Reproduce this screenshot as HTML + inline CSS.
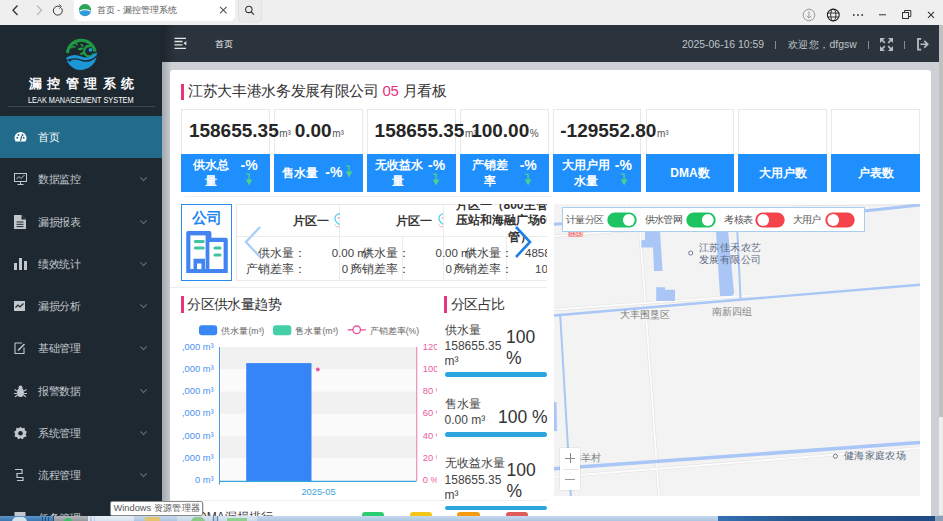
<!DOCTYPE html>
<html><head><meta charset="utf-8">
<style>
*{box-sizing:border-box;margin:0;padding:0}
html,body{width:943px;height:521px;overflow:hidden;background:#cdd1d6;font-family:"Liberation Sans",sans-serif;}
body{position:relative}
.a{position:absolute}
.nw{white-space:nowrap}
#chrome{left:0;top:0;width:943px;height:25px;background:#efefef}
#tab{left:74px;top:0;width:161px;height:21px;background:#fff;border-radius:0 0 5px 5px}
#side{left:0;top:25px;width:162px;height:496px;background:#1d2830}
#head{left:162px;top:25px;width:777px;height:37px;background:#2b343d}
#card{left:170px;top:70px;width:761px;height:460px;background:#fff;border-radius:3px}
#sb{left:939px;top:25px;width:4px;height:392px;background:#c0c0c0}
#sbt{left:939px;top:417px;width:4px;height:98px;background:#eeeeee}
#task{left:0;top:515px;width:943px;height:6px;background:linear-gradient(#a9c4e0,#7fa3c9)}
.menu{left:0;width:162px;height:42px;color:#c2c7cc;font-size:11px}
.menu .t{position:absolute;left:38px;top:50%;transform:translateY(-50%);white-space:nowrap;letter-spacing:-0.5px;--ls:-0.5px}
.menu .ic{position:absolute;left:14px;top:50%;transform:translateY(-50%)}
.menu .chev{position:absolute;left:140.8px;top:50%;width:5px;height:5px;border-right:1px solid #66727c;border-bottom:1px solid #66727c;transform:translateY(-75%) rotate(45deg)}
.ctxt{color:#dfe3e6}
.kpi{position:absolute;top:109px;width:88.6px;height:81.8px;border:1px solid #e9e9e9;background:#fff}
.kpi .num{position:absolute;left:6.5px;width:75px;text-align:center;top:10px;font-size:19px;font-weight:bold;color:#262626;white-space:nowrap;line-height:22px;z-index:3}
.kpi .num small{font-size:10px;font-weight:normal;color:#555;margin-left:0.5px}
.kpi .lab{position:absolute;left:-1px;top:44.4px;width:88.6px;height:37.4px;background:#1e8ffc;color:#fff;font-weight:bold;font-size:12px;line-height:15px}
.lab .l{position:absolute;white-space:nowrap}
.arr{position:absolute}

.c{display:inline-block;width:calc(1em + var(--ls,0px));font-style:normal;text-indent:0}
</style></head><body>
<!-- browser chrome -->
<div id="chrome" class="a"></div>
<div id="tab" class="a"></div>
<svg class="a" style="left:0;top:0" width="943" height="25">
 <path d="M17.5 5.5 L13 10.2 L17.5 15" fill="none" stroke="#333" stroke-width="1.3"/>
 <path d="M37 5.5 L41.5 10.2 L37 15" fill="none" stroke="#bbb" stroke-width="1.3"/>
 <path d="M61.6 8.2 A4.5 4.5 0 1 1 59.8 6.6" fill="none" stroke="#3a3a3a" stroke-width="1"/>
 <path d="M59.2 4.6 L61.4 6.4 L59.4 8.6" fill="none" stroke="#3a3a3a" stroke-width="1"/>
 <circle cx="85" cy="10.2" r="6" fill="#2f9ad6"/>
 <path d="M79 10 A6 6 0 0 1 91 10 Z" fill="#2aa655"/>
 <path d="M79.5 11 Q85 8.5 90.5 11" stroke="#fff" stroke-width="1.2" fill="none"/>
 <path d="M220 6.8 L226.6 13.4 M226.6 6.8 L220 13.4" stroke="#555" stroke-width="1.1"/>
 <rect x="238.5" y="-3" width="23" height="25" rx="4" fill="#ebebeb" stroke="#e2e2e2"/>
 <circle cx="248.8" cy="9.4" r="3.2" fill="none" stroke="#333" stroke-width="1.05"/>
 <path d="M251.2 11.8 L254 14.6" stroke="#333" stroke-width="1.2"/>
 <circle cx="809" cy="15" r="5.8" fill="none" stroke="#999" stroke-width="1"/>
 <path d="M809 11.5 V18 M806.6 15.8 L809 18.2 L811.4 15.8" fill="none" stroke="#999" stroke-width="1"/>
 <circle cx="833.3" cy="15" r="5.9" fill="none" stroke="#222" stroke-width="1.1"/>
 <ellipse cx="833.3" cy="15" rx="2.6" ry="5.9" fill="none" stroke="#222" stroke-width="0.9"/>
 <path d="M827.5 13 H839 M827.5 17 H839" stroke="#222" stroke-width="0.9"/>
 <circle cx="853.8" cy="15" r="0.9" fill="#333"/><circle cx="858" cy="15" r="0.9" fill="#333"/><circle cx="862.2" cy="15" r="0.9" fill="#333"/>
 <path d="M879 14.8 H886" stroke="#333" stroke-width="1"/>
 <rect x="902.5" y="12.5" width="6" height="6" fill="none" stroke="#333" stroke-width="1"/>
 <path d="M904.5 12.5 V10.5 H910.8 V16.5 H908.5" fill="none" stroke="#333" stroke-width="1"/>
 <path d="M928 11.8 L934 17.8 M934 11.8 L928 17.8" stroke="#333" stroke-width="1.1"/>
</svg>
<div class="a nw" style="left:96.5px;top:4px;font-size:9px;color:#5c5c5c;line-height:13px"><i class="c">首</i><i class="c">页</i> - <i class="c">漏</i><i class="c">控</i><i class="c">管</i><i class="c">理</i><i class="c">系</i><i class="c">统</i></div>

<!-- sidebar -->
<div id="side" class="a"></div>
<svg class="a" style="left:63.5px;top:36px" width="35" height="35" viewBox="0 0 34 34">
 <path d="M3.3 16.5 A13.6 13.6 0 0 1 30.2 15.2" fill="none" stroke="#1e9a45" stroke-width="3"/>
 <path d="M7 12 Q9 9 11 11 M9 7 Q12 6 13 9" fill="none" stroke="#1e9a45" stroke-width="1.6"/>
 <path d="M13 13 Q16 10 19 12 Q17 15 13 13 Z M15 18 Q18 14 21 16 Q19 19 15 18 Z M16 7 Q19 8 19 11 Q16 10 16 7 Z M21 9 Q24 8 24 11 Q22 12 21 9 Z" fill="#22a04a"/>
 <path d="M26 10 A5 5 0 1 0 29 17" fill="none" stroke="#1e9a45" stroke-width="2.2"/>
 <circle cx="25.7" cy="13.5" r="1.8" fill="#1d96d6"/>
 <path d="M2.3 21 Q9 16.5 17 20 Q24 23 31.6 15.5 L32 18.5 Q25 25.5 17 22.8 Q9 20 2.6 23.2 Z" fill="#1d96d6"/>
 <path d="M2.8 24.5 Q10 21.5 17 24.2 Q25 27 31.7 20.5 A15.4 15.4 0 0 1 2.8 24.5 Z" fill="#1d96d6"/>
 <circle cx="6" cy="23.8" r="1.1" fill="#1d2830"/>
</svg>
<div class="a nw" style="left:28.5px;top:76px;font-size:12.5px;font-weight:bold;color:#fff;letter-spacing:6px;--ls:6px;line-height:16px"><i class="c">漏</i><i class="c">控</i><i class="c">管</i><i class="c">理</i><i class="c">系</i><i class="c">统</i></div>
<div class="a nw" style="left:28px;top:94.5px;font-size:9.2px;color:#fff;line-height:11px;transform:scaleX(0.8);transform-origin:0 0">LEAK MANAGEMENT SYSTEM</div>
<div class="a" style="left:8px;top:105.5px;width:147px;height:1px;background:#3b4751"></div>

<div class="a menu" style="top:116px;background:#226b8b;color:#fff">
 <svg class="ic" width="13" height="11" viewBox="0 0 13 11"><path d="M1.6 10 A6 6 0 1 1 11.4 10 Z" fill="#fff"/><circle cx="3.3" cy="6.2" r="1" fill="#226b8b"/><circle cx="4.5" cy="3.5" r="1" fill="#226b8b"/><circle cx="8.5" cy="3.5" r="1" fill="#226b8b"/><circle cx="9.7" cy="6.2" r="1" fill="#226b8b"/><path d="M6.5 9.5 L7.6 4.5" stroke="#226b8b" stroke-width="1.2"/></svg>
 <div class="t"><i class="c">首</i><i class="c">页</i></div>
</div>
<div class="a menu" style="top:158.3px">
 <svg class="ic" width="13" height="12" viewBox="0 0 13 12"><rect x="0.5" y="0.5" width="12" height="8" fill="none" stroke="#c2c7cc"/><path d="M2.5 6 L5 3.5 L7 5.5 L10.5 2" stroke="#c2c7cc" fill="none"/><path d="M6.5 8.5 V11 M3.5 11.5 H9.5" stroke="#c2c7cc"/></svg>
 <div class="t"><i class="c">数</i><i class="c">据</i><i class="c">监</i><i class="c">控</i></div><div class="chev"></div>
</div>
<div class="a menu" style="top:200.6px">
 <svg class="ic" width="12" height="14" viewBox="0 0 12 14"><path d="M0 0 H7.5 L12 4.5 V14 H0 Z" fill="#c2c7cc"/><path d="M7.5 0 V4.5 H12" fill="#1d2830"/><path d="M2.5 7 H9.5 M2.5 9.3 H9.5 M2.5 11.6 H9.5" stroke="#1d2830" stroke-width="1"/></svg>
 <div class="t"><i class="c">漏</i><i class="c">损</i><i class="c">报</i><i class="c">表</i></div><div class="chev"></div>
</div>
<div class="a menu" style="top:242.8px">
 <svg class="ic" width="13" height="12" viewBox="0 0 13 12"><rect x="0" y="5" width="3" height="7" fill="#c2c7cc"/><rect x="5" y="0" width="3" height="12" fill="#c2c7cc"/><rect x="10" y="3" width="3" height="9" fill="#c2c7cc"/></svg>
 <div class="t"><i class="c">绩</i><i class="c">效</i><i class="c">统</i><i class="c">计</i></div><div class="chev"></div>
</div>
<div class="a menu" style="top:285.1px">
 <svg class="ic" width="11" height="10" viewBox="0 0 11 10"><rect x="0" y="0" width="11" height="10" fill="#c2c7cc"/><path d="M1.5 6.5 L4 4 L6 6 L9.5 2.5" stroke="#1d2830" fill="none" stroke-width="1.2"/></svg>
 <div class="t"><i class="c">漏</i><i class="c">损</i><i class="c">分</i><i class="c">析</i></div><div class="chev"></div>
</div>
<div class="a menu" style="top:327.4px">
 <svg class="ic" width="12" height="13" viewBox="0 0 12 13"><path d="M1 1.5 H8 M1 1.5 V12 H10 V6" fill="none" stroke="#c2c7cc" stroke-width="1.1"/><path d="M4 9 L10.5 2.5" stroke="#c2c7cc" stroke-width="1.6"/></svg>
 <div class="t"><i class="c">基</i><i class="c">础</i><i class="c">管</i><i class="c">理</i></div><div class="chev"></div>
</div>
<div class="a menu" style="top:369.7px">
 <svg class="ic" width="13" height="13" viewBox="0 0 13 13"><ellipse cx="6.5" cy="8" rx="3.5" ry="4.5" fill="#c2c7cc"/><circle cx="6.5" cy="3" r="2" fill="#c2c7cc"/><path d="M0.5 5 L3 6.5 M12.5 5 L10 6.5 M0 9 H3 M13 9 H10 M1 12.5 L3.5 10.5 M12 12.5 L9.5 10.5" stroke="#c2c7cc" stroke-width="1.1"/></svg>
 <div class="t"><i class="c">报</i><i class="c">警</i><i class="c">数</i><i class="c">据</i></div><div class="chev"></div>
</div>
<div class="a menu" style="top:412.0px">
 <svg class="ic" width="13" height="13" viewBox="0 0 13 13"><path d="M6.5 0 L8 1.8 L10.6 1.3 L10.9 3.9 L13 5.3 L11.7 7.6 L12.5 10.1 L9.9 10.7 L8.6 13 L6.5 11.6 L4.4 13 L3.1 10.7 L0.5 10.1 L1.3 7.6 L0 5.3 L2.1 3.9 L2.4 1.3 L5 1.8 Z" fill="#c2c7cc"/><circle cx="6.5" cy="6.8" r="2.3" fill="#1d2830"/></svg>
 <div class="t"><i class="c">系</i><i class="c">统</i><i class="c">管</i><i class="c">理</i></div><div class="chev"></div>
</div>
<div class="a menu" style="top:454.2px">
 <svg class="ic" width="12" height="13" viewBox="0 0 12 13"><path d="M1 1 H8 V5 H3 V9 H9 V12 H3" fill="none" stroke="#c2c7cc" stroke-width="1.2"/></svg>
 <div class="t"><i class="c">流</i><i class="c">程</i><i class="c">管</i><i class="c">理</i></div><div class="chev"></div>
</div>
<div class="a menu" style="top:496.5px">
 <svg class="ic" width="12" height="13" viewBox="0 0 12 13"><rect x="0.5" y="0.5" width="11" height="12" fill="#c2c7cc"/></svg>
 <div class="t"><i class="c">任</i><i class="c">务</i><i class="c">管</i><i class="c">理</i></div><div class="chev"></div>
</div>

<!-- header -->
<div id="head" class="a"></div>
<div class="a" style="left:162px;top:25px;width:14px;height:37px;background:linear-gradient(90deg,rgba(20,28,34,.6),rgba(43,52,61,0))"></div>
<svg class="a" style="left:174px;top:37px" width="14" height="13" viewBox="0 0 14 13">
 <path d="M0.5 1.3 H12 M0.5 4.5 H8.5 M0.5 7.8 H8.5 M0.5 11.3 H12" stroke="#e3e6e8" stroke-width="1.3"/>
 <path d="M12.3 4 L9.5 6.2 L12.3 8.4 Z" fill="#e3e6e8"/>
</svg>
<div class="a nw" style="left:214.5px;top:38px;font-size:9px;color:#f2f2f2;line-height:12px"><i class="c">首</i><i class="c">页</i></div>
<div class="a nw" style="left:682px;top:38px;font-size:10.4px;color:#bfc4c8;line-height:13px">2025-06-16 10:59</div>
<div class="a" style="left:775.3px;top:41.2px;width:1px;height:7.4px;background:#858c92"></div>
<div class="a nw" style="left:788px;top:37.5px;font-size:10.4px;color:#bfc4c8;line-height:13px"><i class="c">欢</i><i class="c">迎</i><i class="c">您</i><i class="c">，</i>dfgsw</div>
<div class="a" style="left:868.3px;top:41.2px;width:1px;height:7.4px;background:#858c92"></div>
<svg class="a" style="left:880px;top:37.6px" width="13" height="13" viewBox="0 0 13 13">
 <g fill="#b8bdc2"><path d="M0 0 H5 L0 5 Z"/><path d="M13 0 H8 L13 5 Z"/><path d="M0 13 H5 L0 8 Z"/><path d="M13 13 H8 L13 8 Z"/></g>
 <g stroke="#b8bdc2" stroke-width="1.7"><path d="M1.5 1.5 L4.8 4.8 M11.5 1.5 L8.2 4.8 M1.5 11.5 L4.8 8.2 M11.5 11.5 L8.2 8.2"/></g>
</svg>
<div class="a" style="left:904.3px;top:41.2px;width:1px;height:7.4px;background:#858c92"></div>
<svg class="a" style="left:917px;top:38px" width="12" height="12.5" viewBox="0 0 12 12.5">
 <g stroke="#b8bdc2" fill="none"><path d="M4.2 0.9 H1 V11.6 H4.2" stroke-width="1.8"/><path d="M3.5 6.25 H10.5 M7.3 2.8 L10.7 6.25 L7.3 9.7" stroke-width="1.7"/></g>
</svg>

<!-- content -->
<div class="a" style="left:162px;top:62px;width:10px;height:453px;background:linear-gradient(90deg,rgba(120,128,136,.5),rgba(205,209,214,0))"></div>
<div id="card" class="a"></div>
<div class="a" style="left:181px;top:83.5px;width:3px;height:16px;background:#e8337e"></div>
<div class="a nw" style="left:188px;top:81px;font-size:15px;letter-spacing:-0.32px;--ls:-0.32px;color:#333;line-height:20px"><i class="c">江</i><i class="c">苏</i><i class="c">大</i><i class="c">丰</i><i class="c">港</i><i class="c">水</i><i class="c">务</i><i class="c">发</i><i class="c">展</i><i class="c">有</i><i class="c">限</i><i class="c">公</i><i class="c">司</i> <span style="color:#e8337e">05</span> <i class="c">月</i><i class="c">看</i><i class="c">板</i></div>
<div class="kpi" style="left:181.40px"><div class="num">158655.35<small>m³</small></div><div class="lab"><div class="l" style="left:12.1px;top:4.0px"><i class="c">供</i><i class="c">水</i><i class="c">总</i></div><div class="l" style="left:23.5px;top:19.5px"><i class="c">量</i></div><div class="l" style="left:59.1px;top:3.5px;font-size:14px">-%</div><svg class="arr" style="left:63.5px;top:18.5px" width="8" height="13" viewBox="0 0 8 13"><path d="M1 1.2 H4.1 V7.5" fill="none" stroke="#4fd18b" stroke-width="1.3"/><path d="M0.8 6.6 H7.4 L4.1 12.4 Z" fill="#4fd18b"/></svg></div></div>
<div class="kpi" style="left:274.24px"><div class="num">0.00<small>m³</small></div><div class="lab"><div class="l" style="left:8.0px;top:12.0px"><i class="c">售</i><i class="c">水</i><i class="c">量</i></div><div class="l" style="left:51.0px;top:10.5px;font-size:14px">-%</div><svg class="arr" style="left:70.7px;top:10.5px" width="8" height="13" viewBox="0 0 8 13"><path d="M1 1.2 H4.1 V7.5" fill="none" stroke="#4fd18b" stroke-width="1.3"/><path d="M0.8 6.6 H7.4 L4.1 12.4 Z" fill="#4fd18b"/></svg></div></div>
<div class="kpi" style="left:367.08px"><div class="num">158655.35<small>m³</small></div><div class="lab"><div class="l" style="left:8.4px;top:4.0px"><i class="c">无</i><i class="c">收</i><i class="c">益</i><i class="c">水</i></div><div class="l" style="left:25.3px;top:19.5px"><i class="c">量</i></div><div class="l" style="left:60.9px;top:3.5px;font-size:14px">-%</div><svg class="arr" style="left:64.9px;top:18.5px" width="8" height="13" viewBox="0 0 8 13"><path d="M1 1.2 H4.1 V7.5" fill="none" stroke="#4fd18b" stroke-width="1.3"/><path d="M0.8 6.6 H7.4 L4.1 12.4 Z" fill="#4fd18b"/></svg></div></div>
<div class="kpi" style="left:459.92px"><div class="num">100.00<small>%</small></div><div class="lab"><div class="l" style="left:11.9px;top:4.0px"><i class="c">产</i><i class="c">销</i><i class="c">差</i></div><div class="l" style="left:24.1px;top:19.5px"><i class="c">率</i></div><div class="l" style="left:59.8px;top:3.5px;font-size:14px">-%</div><svg class="arr" style="left:64.1px;top:18.5px" width="8" height="13" viewBox="0 0 8 13"><path d="M1 1.2 H4.1 V7.5" fill="none" stroke="#4fd18b" stroke-width="1.3"/><path d="M0.8 6.6 H7.4 L4.1 12.4 Z" fill="#4fd18b"/></svg></div></div>
<div class="kpi" style="left:552.76px"><div class="num">-129552.80<small>m³</small></div><div class="lab"><div class="l" style="left:9.5px;top:4.0px"><i class="c">大</i><i class="c">用</i><i class="c">户</i><i class="c">用</i></div><div class="l" style="left:21.0px;top:19.5px"><i class="c">水</i><i class="c">量</i></div><div class="l" style="left:62.1px;top:3.5px;font-size:14px">-%</div><svg class="arr" style="left:66.8px;top:18.5px" width="8" height="13" viewBox="0 0 8 13"><path d="M1 1.2 H4.1 V7.5" fill="none" stroke="#4fd18b" stroke-width="1.3"/><path d="M0.8 6.6 H7.4 L4.1 12.4 Z" fill="#4fd18b"/></svg></div></div>
<div class="kpi" style="left:645.60px"><div class="num"></div><div class="lab"><div class="l" style="left:0;top:12.0px;width:88.6px;text-align:center">DMA<i class="c">数</i></div></div></div>
<div class="kpi" style="left:738.44px"><div class="num"></div><div class="lab"><div class="l" style="left:0;top:12.0px;width:88.6px;text-align:center"><i class="c">大</i><i class="c">用</i><i class="c">户</i><i class="c">数</i></div></div></div>
<div class="kpi" style="left:831.28px"><div class="num"></div><div class="lab"><div class="l" style="left:0;top:12.0px;width:88.6px;text-align:center"><i class="c">户</i><i class="c">表</i><i class="c">数</i></div></div></div>
<div class="a" style="left:185px;top:196px;width:368px;height:1px;background:#ececec"></div>

<!-- company box -->
<div class="a" style="left:181px;top:204px;width:51px;height:77px;border:1px solid #2a8cf0;background:#fff"></div>
<div class="a nw" style="left:192px;top:209px;font-size:14.5px;font-weight:bold;color:#1f86ee;line-height:18px"><i class="c">公</i><i class="c">司</i></div>
<svg class="a" style="left:186px;top:230px" width="42" height="44" viewBox="0 0 42 44">
 <path d="M0.2 3 Q0.2 1 2.2 1 H23.4 Q25.4 1 25.4 3 V7.8 H39.8 Q41.8 7.8 41.8 9.8 V43 H0.2 Z" fill="#4285f0"/>
 <rect x="4.4" y="5.4" width="15.2" height="33.6" fill="#fff"/>
 <rect x="23.4" y="12" width="14.2" height="27" fill="#fff"/>
 <rect x="7.5" y="28.7" width="11.5" height="10.5" fill="#4285f0"/>
 <rect x="11" y="33.5" width="4.4" height="5.6" fill="#fff"/>
 <path d="M9.3 11.6 H17.3 M9.3 18.1 H17.3" stroke="#3fc4a2" stroke-width="3" stroke-linecap="round"/>
 <path d="M29 18 H34 M29 25 H34" stroke="#3fc4a2" stroke-width="3" stroke-linecap="round"/>
</svg>
<!-- carousel table -->
<div class="a" style="left:236px;top:204px;width:311px;height:77px;border:1px solid #e9e9e9;border-right:none;background:#fff;overflow:hidden">
 <div class="a" style="left:0;top:31px;width:311px;height:1px;background:#ececec"></div>
 <div class="a" style="left:102px;top:0;width:1px;height:77px;background:#ececec"></div>
 <div class="a" style="left:206px;top:0;width:1px;height:77px;background:#ececec"></div>
 <div class="a" style="left:165px;top:31px;width:1px;height:46px;background:#ececec"></div>
 <div class="a" style="left:268.5px;top:31px;width:1px;height:46px;background:#ececec"></div>
</div>
<div class="a" style="left:236px;top:204px;width:311px;height:78px;overflow:hidden">
 <div class="a nw" style="left:57px;top:10.2px;font-size:12px;font-weight:bold;color:#333;line-height:15px"><i class="c">片</i><i class="c">区</i><i class="c">一</i></div>
 <div class="a nw" style="left:160px;top:10.2px;font-size:12px;font-weight:bold;color:#333;line-height:15px"><i class="c">片</i><i class="c">区</i><i class="c">一</i></div>
 <svg class="a" style="left:98px;top:8px" width="5.7" height="17" viewBox="0 0 5.7 17"><path d="M6.2 1.6 Q1.2 2.2 0.9 6.2 Q1 9.6 5.4 12.6" fill="none" stroke="#52d0f0" stroke-width="1.3"/><circle cx="4.6" cy="6" r="0.9" fill="#f2a7c8"/><path d="M0.4 12.6 Q1.6 15.2 6 15" fill="none" stroke="#f5b0cf" stroke-width="1"/></svg>
 <svg class="a" style="left:201.6px;top:8px" width="5.7" height="17" viewBox="0 0 5.7 17"><path d="M6.2 1.6 Q1.2 2.2 0.9 6.2 Q1 9.6 5.4 12.6" fill="none" stroke="#52d0f0" stroke-width="1.3"/><circle cx="4.6" cy="6" r="0.9" fill="#f2a7c8"/><path d="M0.4 12.6 Q1.6 15.2 6 15" fill="none" stroke="#f5b0cf" stroke-width="1"/></svg>
 <div class="a nw" style="left:219.5px;top:-6.8px;font-size:12px;font-weight:bold;color:#333;line-height:17px"><i class="c">片</i><i class="c">区</i><i class="c">一</i><i class="c">（</i>800<i class="c">主</i><i class="c">管</i></div><div class="a nw" style="left:219.5px;top:7.5px;font-size:12px;font-weight:bold;color:#333;line-height:17px"><i class="c">压</i><i class="c">站</i><i class="c">和</i><i class="c">海</i><i class="c">融</i><i class="c">广</i><i class="c">场</i>60</div><div class="a nw" style="left:271.5px;top:24.8px;font-size:12px;font-weight:bold;color:#333;line-height:17px"><i class="c">管</i><i class="c">）</i></div>
 <div class="a nw" style="left:95.7px;top:40.8px;font-size:11.5px;color:#444;line-height:16px">0.00 m³<br><span style="padding-left:10px">0 %</span></div>
 <div class="a nw" style="left:199.5px;top:40.8px;font-size:11.5px;color:#444;line-height:16px">0.00 m³<br><span style="padding-left:10px">0 %</span></div>
 <div class="a nw" style="left:289px;top:40.8px;font-size:11.5px;color:#444;line-height:16px">48580<br><span style="padding-left:10px">100</span></div>
 <div class="a nw" style="left:10px;top:40.8px;font-size:12px;color:#444;line-height:16px;text-align:right;width:60px"><i class="c">供</i><i class="c">水</i><i class="c">量</i><i class="c">：</i><br><i class="c">产</i><i class="c">销</i><i class="c">差</i><i class="c">率</i><i class="c">：</i></div>
 <div class="a nw" style="left:113.6px;top:40.8px;font-size:12px;color:#444;line-height:16px;text-align:right;width:60px"><i class="c">供</i><i class="c">水</i><i class="c">量</i><i class="c">：</i><br><i class="c">产</i><i class="c">销</i><i class="c">差</i><i class="c">率</i><i class="c">：</i></div>
 <div class="a nw" style="left:217.2px;top:40.8px;font-size:12px;color:#444;line-height:16px;text-align:right;width:60px"><i class="c">供</i><i class="c">水</i><i class="c">量</i><i class="c">：</i><br><i class="c">产</i><i class="c">销</i><i class="c">差</i><i class="c">率</i><i class="c">：</i></div>
</div>
<svg class="a" style="left:243px;top:225px" width="20" height="35" viewBox="0 0 20 35"><path d="M17 2 L3 17 L17 32" fill="none" stroke="#a9d0f7" stroke-width="2.4"/></svg>
<svg class="a" style="left:513px;top:225px" width="20" height="35" viewBox="0 0 20 35"><path d="M3 2 L17 17 L3 32" fill="none" stroke="#1f7fe6" stroke-width="2.6"/></svg>
<div class="a" style="left:170px;top:287px;width:377px;height:1px;background:#ededed"></div>

<div class="a" style="left:554px;top:204px;width:366px;height:292px;background:#f3f3f3;overflow:hidden">
<svg class="a" style="left:0;top:0" width="366" height="292">
 <g fill="none" stroke-linecap="butt">
  <!-- white roads with grey casing -->
  <polyline points="71.5,0.0 86.0,28.0 91.0,96.0 105.0,292.0" stroke="#e2e2e2" stroke-width="3"/>
  <polyline points="71.5,0.0 86.0,28.0 91.0,96.0 105.0,292.0" stroke="#fdfdfd" stroke-width="1.8"/>
  <polyline points="0.0,32.2 106.0,24.0" stroke="#e2e2e2" stroke-width="3"/>
  <polyline points="0.0,32.2 106.0,24.0" stroke="#fdfdfd" stroke-width="1.8"/>
  <polyline points="0.0,105.7 196.0,91.5" stroke="#e2e2e2" stroke-width="3"/>
  <polyline points="0.0,105.7 196.0,91.5" stroke="#fdfdfd" stroke-width="1.8"/>
  <polyline points="0.0,273.0 366.0,244.0" stroke="#e2e2e2" stroke-width="3"/>
  <polyline points="0.0,273.0 366.0,244.0" stroke="#fdfdfd" stroke-width="1.8"/>
  <polyline points="236.0,0.5 366.0,-0.5" stroke="#dedede" stroke-width="3"/>
  <polyline points="236.0,0.5 366.0,-0.5" stroke="#fdfdfd" stroke-width="1.6"/>
  <!-- blue water lines -->
  <polyline points="0.0,111.5 200.0,94.5 366.0,80.8" stroke="#a9c6f6" stroke-width="2.4"/>
  <polyline points="0.0,264.8 366.0,238.5" stroke="#a9c6f6" stroke-width="3.6"/>
  <polyline points="183.3,27.0 186.5,94.5" stroke="#a9c6f6" stroke-width="2"/>
  <polyline points="6.2,111.0 16.8,292.0" stroke="#a9c6f6" stroke-width="2"/>
  <polyline points="0.0,20.2 8.0,19.7" stroke="#a9c6f6" stroke-width="3"/>
  <polyline points="1,198 1.5,227" stroke="#a9c6f6" stroke-width="3"/>
  <polyline points="310.0,7.0 366.0,1.0" stroke="#a9c6f6" stroke-width="3"/>
 </g>
 <polygon points="91.0,27.0 106.0,27.0 108.5,67.0 100.0,67.0 99.0,43.4 87.3,43.4 87.3,36.0 91.0,36.0" fill="#a9c6f6"/>
 <polygon points="102.2,83.3 111.0,83.3 111.0,85.8 121.0,85.8 121.0,97.0 102.2,97.0" fill="#a9c6f6"/>
 <path d="M162.0,27.0 L174.0,27.0 L180.0,88.0 Q180.0,92.0 176.0,92.0 L166.0,92.0 Z" fill="#a9c6f6"/>
 <circle cx="136.7" cy="49.1" r="2" fill="#fff" stroke="#6a7890" stroke-width="1"/>
 <circle cx="281.4" cy="252.2" r="2" fill="#fff" stroke="#6a7890" stroke-width="1"/>
 <rect x="14.2" y="26.4" width="15" height="6.5" rx="1.5" fill="#f07777" stroke="#fbe3e3" stroke-width="0.6"/>
 <text x="15.5" y="31.8" font-size="5.5" fill="#fff" font-family="Liberation Sans">G343</text>
</svg>
<div class="a nw" style="left:144.6px;top:38.0px;font-size:10px;letter-spacing:0.5px;--ls:0.5px;color:#5b6a82;line-height:12px"><i class="c">江</i><i class="c">苏</i><i class="c">佳</i><i class="c">禾</i><i class="c">农</i><i class="c">艺</i><br><i class="c">发</i><i class="c">展</i><i class="c">有</i><i class="c">限</i><i class="c">公</i><i class="c">司</i></div>
<div class="a nw" style="left:66.0px;top:104.7px;font-size:10px;color:#7c7c7c;line-height:12px"><i class="c">大</i><i class="c">丰</i><i class="c">围</i><i class="c">垦</i><i class="c">区</i></div>
<div class="a nw" style="left:157.6px;top:101.5px;font-size:10px;color:#858585;line-height:12px"><i class="c">南</i><i class="c">新</i><i class="c">四</i><i class="c">组</i></div>
<div class="a nw" style="left:17.0px;top:247.5px;font-size:10px;color:#7c7c7c;line-height:12px"><i class="c">牛</i><i class="c">羊</i><i class="c">村</i></div>
<div class="a nw" style="left:289.8px;top:246.2px;font-size:10.4px;color:#5b6a82;line-height:12px"><i class="c">健</i><i class="c">海</i><i class="c">家</i><i class="c">庭</i><i class="c">农</i><i class="c">场</i></div>
<!-- zoom control -->
<div class="a" style="left:6.4px;top:244px;width:19.6px;height:41.6px;background:#fff;box-shadow:0 0 1px rgba(0,0,0,.25)"></div>
<div class="a" style="left:9px;top:264.6px;width:14.5px;height:1px;background:#e5e5e5"></div>
<div class="a" style="left:11.2px;top:253.6px;width:10px;height:1px;background:#8a8a8a"></div>
<div class="a" style="left:15.7px;top:249px;width:1px;height:10px;background:#8a8a8a"></div>
<div class="a" style="left:11.2px;top:275.2px;width:10px;height:1px;background:#9a9a9a"></div>
</div>
<!-- map toggles -->
<div class="a" style="left:562px;top:207px;width:302.5px;height:24.5px;background:#fff;border:1px solid #a9cdef"></div>
<div class="a nw" style="left:566px;top:213.5px;font-size:10px;letter-spacing:-0.65px;--ls:-0.65px;color:#555;line-height:11px"><i class="c">计</i><i class="c">量</i><i class="c">分</i><i class="c">区</i></div>
<div class="a nw" style="left:644.8px;top:213.5px;font-size:10px;letter-spacing:-0.65px;--ls:-0.65px;color:#555;line-height:11px"><i class="c">供</i><i class="c">水</i><i class="c">管</i><i class="c">网</i></div>
<div class="a nw" style="left:724.2px;top:213.5px;font-size:10px;letter-spacing:-0.65px;--ls:-0.65px;color:#555;line-height:11px"><i class="c">考</i><i class="c">核</i><i class="c">表</i></div>
<div class="a nw" style="left:792.7px;top:213.5px;font-size:10px;letter-spacing:-0.65px;--ls:-0.65px;color:#555;line-height:11px"><i class="c">大</i><i class="c">用</i><i class="c">户</i></div>
<svg class="a" style="left:607px;top:211.5px" width="30" height="16"><rect x="0.3" y="0.5" width="29.4" height="15" rx="7.5" fill="#1fc462"/><circle cx="21.8" cy="8" r="5.9" fill="#fff"/></svg>
<svg class="a" style="left:686px;top:211.5px" width="30" height="16"><rect x="0.3" y="0.5" width="29.4" height="15" rx="7.5" fill="#1fc462"/><circle cx="21.8" cy="8" r="5.9" fill="#fff"/></svg>
<svg class="a" style="left:755px;top:211.5px" width="30" height="16"><rect x="0.3" y="0.5" width="29.4" height="15" rx="7.5" fill="#f4434a"/><circle cx="8.2" cy="8" r="5.9" fill="#fff"/></svg>
<svg class="a" style="left:824.5px;top:211.5px" width="30" height="16"><rect x="0.3" y="0.5" width="29.4" height="15" rx="7.5" fill="#f4434a"/><circle cx="8.2" cy="8" r="5.9" fill="#fff"/></svg>


<!-- chart panel -->
<div class="a" style="left:181px;top:296px;width:3px;height:17px;background:#e8337e"></div>
<div class="a nw" style="left:187.2px;top:295px;font-size:14px;letter-spacing:-0.6px;--ls:-0.6px;color:#333;line-height:19px"><i class="c">分</i><i class="c">区</i><i class="c">供</i><i class="c">水</i><i class="c">量</i><i class="c">趋</i><i class="c">势</i></div>
<div class="a" style="left:170px;top:318px;width:267px;height:182px;overflow:hidden">
 <svg class="a" style="left:0;top:0" width="267" height="182">
  <rect x="29" y="7.3" width="18.2" height="10" rx="3" fill="#3a86f5"/>
  <text x="51.4" y="15.6" font-size="8.6" fill="#666" font-family="Liberation Sans">供水量(m³)</text>
  <rect x="103" y="7.3" width="18.3" height="10" rx="3" fill="#45cfa8"/>
  <text x="125.4" y="15.6" font-size="8.6" fill="#666" font-family="Liberation Sans">售水量(m³)</text>
  <path d="M177.6 11.8 H195.8" stroke="#ee5aa0" stroke-width="1.4"/>
  <circle cx="186.7" cy="11.8" r="3.8" fill="#fff" stroke="#ee5aa0" stroke-width="1.4"/>
  <text x="199.7" y="15.6" font-size="8.6" fill="#666" font-family="Liberation Sans">产销差率(%)</text>
  <!-- bands -->
  <rect x="49.5" y="29" width="197" height="22.3" fill="#f1f1f1"/>
  <rect x="49.5" y="51.3" width="197" height="22.3" fill="#fbfbfb"/>
  <rect x="49.5" y="73.6" width="197" height="22.3" fill="#f1f1f1"/>
  <rect x="49.5" y="95.9" width="197" height="22.3" fill="#fbfbfb"/>
  <rect x="49.5" y="118.2" width="197" height="22.3" fill="#f1f1f1"/>
  <rect x="49.5" y="140.5" width="197" height="22.5" fill="#fbfbfb"/>
  <rect x="76.2" y="45.1" width="65.3" height="117.9" fill="#3585f6"/>
  <circle cx="147.8" cy="51.5" r="1.9" fill="#ee5aa0"/>
  <path d="M49.5 29 V166" stroke="#4f9af0" stroke-width="1"/>
  <path d="M49 163.4 H246.5" stroke="#3aa4dc" stroke-width="1.3"/>
  <path d="M49.5 163 V166.5" stroke="#3aa4dc" stroke-width="1"/>
  <path d="M246.7 29 V163" stroke="#f08bb8" stroke-width="1.2"/>
  <g font-size="9.3" fill="#4a90f0" font-family="Liberation Sans" text-anchor="end">
   <text x="43.5" y="31.5">,000 m³</text>
   <text x="43.5" y="53.8">,000 m³</text>
   <text x="43.5" y="76.1">,000 m³</text>
   <text x="43.5" y="98.4">,000 m³</text>
   <text x="43.5" y="120.7">,000 m³</text>
   <text x="43.5" y="143">,000 m³</text>
   <text x="43.5" y="165.3">0 m³</text>
  </g>
  <g font-size="9.3" fill="#ee5aa0" font-family="Liberation Sans">
   <text x="252.8" y="31.5">120 %</text>
   <text x="252.8" y="53.8">100 %</text>
   <text x="252.8" y="76.1">80 %</text>
   <text x="252.8" y="98.4">60 %</text>
   <text x="252.8" y="120.7">40 %</text>
   <text x="252.8" y="143">20 %</text>
   <text x="252.8" y="165.3">0 %</text>
  </g>
  <text x="148.5" y="176.8" font-size="9.3" fill="#3aa4dc" font-family="Liberation Sans" text-anchor="middle">2025-05</text>
 </svg>
</div>
<div class="a" style="left:170px;top:499.5px;width:270px;height:1px;background:#efefef"></div>
<!-- 分区占比 -->
<div class="a" style="left:444.3px;top:296px;width:3px;height:16.6px;background:#e8337e"></div>
<div class="a nw" style="left:451px;top:295px;font-size:14px;letter-spacing:-0.75px;--ls:-0.75px;color:#333;line-height:19px"><i class="c">分</i><i class="c">区</i><i class="c">占</i><i class="c">比</i></div>
<div class="a nw" style="left:444.6px;top:322px;font-size:12px;color:#444;line-height:16px"><i class="c">供</i><i class="c">水</i><i class="c">量</i></div>
<div class="a nw" style="left:444.6px;top:339px;font-size:12px;color:#444;line-height:15px">158655.35<br>m³</div>
<div class="a nw" style="left:506px;top:327px;font-size:17.5px;color:#333;line-height:21px">100<br>%</div>
<div class="a" style="left:444.6px;top:372px;width:102px;height:4.8px;border-radius:3px;background:#2aa5de"></div>
<div class="a nw" style="left:444.6px;top:395.8px;font-size:12px;color:#444;line-height:16px"><i class="c">售</i><i class="c">水</i><i class="c">量</i></div>
<div class="a nw" style="left:444.6px;top:412.5px;font-size:12px;color:#444;line-height:15px">0.00 m³</div>
<div class="a nw" style="left:498px;top:407px;font-size:17.5px;color:#333;line-height:21px">100 %</div>
<div class="a" style="left:444.6px;top:432px;width:102px;height:4.8px;border-radius:3px;background:#2aa5de"></div>
<div class="a nw" style="left:444.6px;top:455.3px;font-size:12px;color:#444;line-height:16px"><i class="c">无</i><i class="c">收</i><i class="c">益</i><i class="c">水</i><i class="c">量</i></div>
<div class="a nw" style="left:444.6px;top:473px;font-size:12px;color:#444;line-height:15px">158655.35<br>m³</div>
<div class="a nw" style="left:506.5px;top:460px;font-size:17.5px;color:#333;line-height:21px">100<br>%</div>
<div class="a" style="left:440px;top:500px;width:107px;height:1px;background:#efefef"></div>
<div class="a" style="left:444.6px;top:505.6px;width:102px;height:4.8px;border-radius:3px;background:#2aa5de"></div>
<!-- next section (mostly hidden) -->
<div class="a nw" style="left:198px;top:509px;font-size:12px;color:#333;line-height:16px">DMA<i class="c">漏</i><i class="c">损</i><i class="c">排</i><i class="c">行</i></div>
<div class="a" style="left:362.4px;top:512px;width:21.4px;height:6px;border-radius:3px;background:#2ecc71"></div>
<div class="a" style="left:410px;top:512px;width:22px;height:6px;border-radius:3px;background:#f5c518"></div>
<div class="a" style="left:457.4px;top:512px;width:22.6px;height:6px;border-radius:3px;background:#f39c12"></div>
<div class="a" style="left:506px;top:512px;width:22.3px;height:6px;border-radius:3px;background:#e05a5a"></div>
<!-- tooltip -->
<div class="a nw" style="left:109.5px;top:500.5px;width:93px;height:15px;background:#fdfdfd;border:1px solid #8a8a8a;border-radius:2px;box-shadow:1px 1px 1px rgba(0,0,0,.15);font-size:9.3px;color:#575757;line-height:13px;padding-left:3px">Windows <i class="c">资</i><i class="c">源</i><i class="c">管</i><i class="c">理</i><i class="c">器</i></div>



<div id="sb" class="a"></div>
<div id="sbt" class="a"></div>
<div id="task" class="a" style="top:515.5px;height:5.5px;background:linear-gradient(#c6d9ee,#adc6e3)">
 <div class="a" style="left:0;top:0;width:52.5px;height:6px;background:linear-gradient(#5b95ca,#3470ab)"></div>
 <div class="a" style="left:12px;top:1px;width:15px;height:5px;border-radius:8px 8px 0 0;background:#d5e3ef"></div>
 <div class="a" style="left:42px;top:1px;width:1px;height:5px;background:#2a4e78"></div>
 <div class="a" style="left:45px;top:1px;width:1px;height:5px;background:#2a4e78"></div>
 <div class="a" style="left:48px;top:1px;width:1px;height:5px;background:#2a4e78"></div>
 <div class="a" style="left:52.5px;top:0;width:1.5px;height:6px;background:#2b4a6a"></div>
 <div class="a" style="left:54px;top:0;width:33.5px;height:6px;background:linear-gradient(#b3b7bb,#8d9297)"></div>
 <div class="a" style="left:63.5px;top:2px;width:8px;height:4px;border-radius:4px 4px 0 0;background:#3cc26a"></div>
 <div class="a" style="left:88px;top:0;width:2px;height:6px;background:#dfe8f0"></div>
 <div class="a" style="left:91.5px;top:0;width:2px;height:6px;background:#dfe8f0"></div>
 <div class="a" style="left:95px;top:0;width:39.4px;height:6px;background:linear-gradient(#e6eef6,#d3e0ee)"></div>
 <div class="a" style="left:145px;top:1px;width:15px;height:5px;background:#e3c46e"></div>
 <div class="a" style="left:177px;top:0;width:35px;height:6px;background:linear-gradient(#d8e5f2,#c3d6ea)"></div>
 <div class="a" style="left:191px;top:1px;width:14px;height:5px;border-radius:7px 7px 0 0;background:#8cc98a"></div>
 <div class="a" style="left:213px;top:0;width:1px;height:6px;background:#6d86a3"></div>
 <div class="a" style="left:217px;top:0;width:1px;height:6px;background:#6d86a3"></div>
 <div class="a" style="left:218.5px;top:0;width:38.5px;height:6px;background:linear-gradient(#dbe7f3,#c6d8eb)"></div>
 <div class="a" style="left:227px;top:2px;width:20px;height:4px;background:#8fd08f"></div>
 <div class="a" style="left:718px;top:0;width:217px;height:6px;background:linear-gradient(90deg,#3571b2,#24578f 35%,#1f4b84)"></div>
 <div class="a" style="left:935px;top:0;width:8px;height:6px;background:#8aa0b8"></div>
</div>
</body></html>
